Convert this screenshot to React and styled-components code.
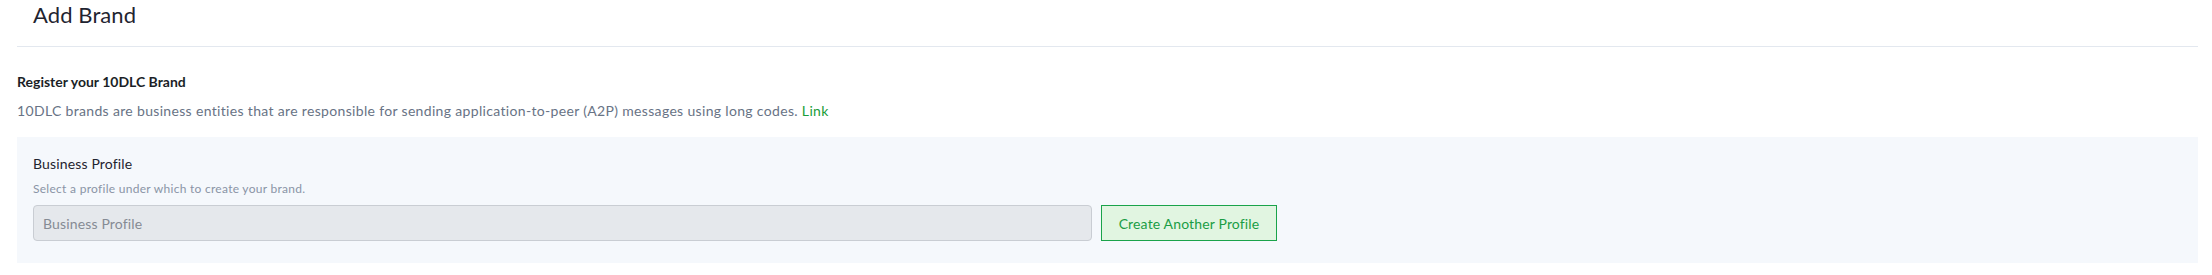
import React from "react";
import styled, { createGlobalStyle } from "styled-components";

const GlobalStyle = createGlobalStyle`
  body {
    margin: 0;
    background: #ffffff;
    font-family: Lato, "Open Sans", "Liberation Sans", sans-serif;
  }
`;

const Page = styled.div`
  padding: 0 14px 0 17px;
`;

const Header = styled.div`
  padding: 0 16px 16px;
  border-bottom: 1px solid #e3e8ef;
`;

const Title = styled.h1`
  margin: 0;
  font-size: 22px;
  line-height: 30px;
  font-weight: 400;
  color: #1f2430;
  letter-spacing: 0.1px;
`;

const Intro = styled.div`
  padding-top: 25px;
`;

const SectionTitle = styled.h2`
  margin: 0;
  font-size: 14px;
  line-height: 20px;
  font-weight: 700;
  color: #1b1f27;
`;

const Description = styled.p`
  margin: 9px 0 0;
  font-size: 14px;
  line-height: 20px;
  letter-spacing: 0.33px;
  color: #687385;
`;

const Link = styled.a`
  color: #1a9d3a;
  text-decoration: none;
`;

const Panel = styled.div`
  margin-top: 16px;
  padding: 17px 16px 22px;
  background: #f5f8fc;
`;

const Label = styled.div`
  font-size: 14px;
  line-height: 20px;
  letter-spacing: 0.15px;
  color: #1f2430;
`;

const Hint = styled.div`
  margin-top: 7px;
  font-size: 12px;
  line-height: 16px;
  letter-spacing: 0.28px;
  color: #8a94a6;
`;

const Row = styled.div`
  display: flex;
  align-items: center;
  gap: 9px;
  margin-top: 8px;
`;

const Input = styled.input`
  box-sizing: border-box;
  width: 1059px;
  height: 36px;
  padding: 0 9px;
  border: 1px solid #c9cdd3;
  border-radius: 4px;
  background: #e5e8ec;
  font-family: inherit;
  font-size: 14px;
  letter-spacing: 0.15px;
  color: #1f2430;
  outline: none;

  &::placeholder {
    color: #858b94;
  }
`;

const Button = styled.button`
  box-sizing: border-box;
  width: 176px;
  height: 36px;
  padding: 0 16px;
  border: 1.5px solid #1aa34a;
  border-radius: 0;
  background: #e1f5e1;
  font-family: inherit;
  font-size: 14px;
  letter-spacing: 0.15px;
  color: #1a9d45;
  cursor: pointer;
  white-space: nowrap;
`;

export default function App() {
  return (
    <>
      <GlobalStyle />
      <Page>
        <Header>
          <Title>Add Brand</Title>
        </Header>
        <Intro>
          <SectionTitle>Register your 10DLC Brand</SectionTitle>
          <Description>
            10DLC brands are business entities that are responsible for sending
            application-to-peer (A2P) messages using long codes. <Link href="#">Link</Link>
          </Description>
        </Intro>
        <Panel>
          <Label>Business Profile</Label>
          <Hint>Select a profile under which to create your brand.</Hint>
          <Row>
            <Input placeholder="Business Profile" disabled />
            <Button>Create Another Profile</Button>
          </Row>
        </Panel>
      </Page>
    </>
  );
}
